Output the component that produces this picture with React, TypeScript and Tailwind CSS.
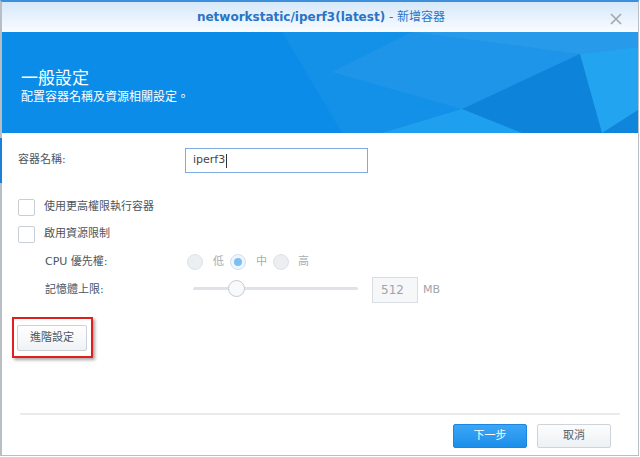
import React from "react"

const FONT = { fontFamily: '"DejaVu Sans", "Noto Sans CJK TC", sans-serif' }

function HeaderArt() {
  return (
    <svg className="absolute inset-0" width="636" height="101" viewBox="0 0 636 101">
      <polygon points="280,0 636,0 636,101 340,101" fill="#ffffff" opacity="0.04" />
      <polygon points="410,0 578,22 460,77 330,40" fill="#ffffff" opacity="0.05" />
      <polygon points="410,0 636,0 636,15 578,22" fill="#ffffff" opacity="0.09" />
      <polygon points="578,22 636,15 636,78 600,101" fill="#3cc4ff" opacity="0.4" />
      <polygon points="578,22 460,77 520,101 600,101" fill="#0058a8" opacity="0.22" />
      <polygon points="460,77 380,101 520,101" fill="#40c8ff" opacity="0.28" />
      <polygon points="636,78 600,101 636,101" fill="#0058a8" opacity="0.2" />
    </svg>
  )
}

function Checkbox({ label }: { label: string }) {
  return (
    <div className="h-[27px] flex items-center">
      <div className="w-[17px] h-[17px] border border-[#c9ced4] rounded-[2px] bg-white mr-[9px]" />
      <span className="text-[#4b5560]">{label}</span>
    </div>
  )
}

function Radio({ checked }: { checked?: boolean }) {
  return (
    <div
      className={`w-[16px] h-[16px] rounded-full border flex items-center justify-center ${
        checked ? "border-[#cfe0f0] bg-[#eef5fc]" : "border-[#dde2e7] bg-[#eceff2]"
      }`}
    >
      {checked && <div className="w-[8px] h-[8px] rounded-full bg-[#7dbff0]" />}
    </div>
  )
}

export default function App() {
  return (
    <div className="w-[640px] h-[457px] bg-white relative overflow-hidden text-[11px]" style={FONT}>
      <div className="w-[639px] h-[456px] flex flex-col border-l-2 border-r border-b border-[#b9bec4] border-t-2 border-t-[#3d8fdc]">
        {/* title bar */}
        <div className="h-[30px] relative flex items-center justify-center bg-gradient-to-b from-[#d5e8fa] to-[#f8fbff] border-b border-white">
          <div className="text-[#2a73c6] text-[12px] ml-[2px]">
            <span className="font-bold">networkstatic/iperf3(latest)</span>
            <span> - 新增容器</span>
          </div>
          <svg className="absolute right-[16px] top-[11px]" width="12" height="12" viewBox="0 0 12 12">
            <path d="M1 1 L11 11 M11 1 L1 11" stroke="#a3a6aa" strokeWidth="1.6" />
          </svg>
        </div>

        {/* blue header */}
        <div className="h-[101px] relative bg-[#0a8ce8] overflow-hidden">
          <HeaderArt />
          <div className="relative pl-[19px] pt-[36px] text-white">
            <div className="text-[17px] leading-[20px]">一般設定</div>
            <div className="text-[12px] leading-[16px] mt-[1px]">配置容器名稱及資源相關設定。</div>
          </div>
        </div>

        {/* body */}
        <div className="flex flex-col pl-[16px]">
          <div className="mt-[15px] h-[25px] flex items-center">
            <span className="w-[167px] text-[#4b5560]">容器名稱:</span>
            <div className="w-[183px] h-[25px] border border-[#80aae2] flex items-center pl-[7px] text-[#444]">
              iperf3<span className="w-px h-[14px] bg-[#333] ml-px" />
            </div>
          </div>

          <div className="mt-[21px]">
            <Checkbox label="使用更高權限執行容器" />
            <Checkbox label="啟用資源限制" />
          </div>

          <div className="h-[28px] flex items-center pl-[27px]">
            <span className="w-[142px] text-[#4b5560]">CPU 優先權:</span>
            <Radio />
            <span className="ml-[10px] mr-[6px] text-[#a8adb2]">低</span>
            <Radio checked />
            <span className="ml-[10px] mr-[6px] text-[#a8adb2]">中</span>
            <Radio />
            <span className="ml-[9px] text-[#a8adb2]">高</span>
          </div>

          <div className="h-[28px] flex items-center pl-[27px]">
            <span className="w-[148px] text-[#4b5560]">記憶體上限:</span>
            <div className="relative w-[165px] h-[17px] flex items-center -mt-[4px]">
              <div className="w-full h-[3px] rounded-full bg-[#dfe3e7]" />
              <div className="absolute left-[35px] top-0 w-[17px] h-[17px] rounded-full border border-[#c6cbd0] bg-[#f7f9fb]" />
            </div>
            <div className="ml-[14px] w-[46px] h-[26px] border border-[#d9dde1] bg-[#f6f7f9] flex items-center pl-[8px] text-[#a0a4a8] text-[12px]">
              512
            </div>
            <span className="ml-[5px] text-[#a0a4a8]">MB</span>
          </div>

          <div className="mt-[13px] -ml-[6px] w-[81px] h-[41px] border-2 border-[#e0201e] shadow-[2px_2px_3px_rgba(0,0,0,0.35)] pl-[3px] pt-[6px]">
            <button className="w-[70px] h-[26px] border border-[#cdd2d8] rounded-[2px] bg-gradient-to-b from-white to-[#eff2f5] text-[#4b5560]">
              進階設定
            </button>
          </div>

          <div className="mt-[55px] ml-[2px] w-[600px] h-[2px] bg-[#e9ebed]" />

          <div className="mt-[9px] flex justify-end gap-[10px] pr-[27px]">
            <button className="w-[74px] h-[24px] rounded-[2px] border border-[#1c86df] bg-gradient-to-b from-[#3aa6f6] to-[#1b8fea] text-white">
              下一步
            </button>
            <button className="w-[74px] h-[24px] rounded-[2px] border border-[#cfd4da] bg-gradient-to-b from-[#fbfcfd] to-[#eef1f4] text-[#555c63]">
              取消
            </button>
          </div>
        </div>
      </div>
      {/* background window edge peeking at left */}
      <div className="absolute left-0 top-[138px] w-[2px] h-[45px] bg-[#1e7fd8]" />
    </div>
  )
}
